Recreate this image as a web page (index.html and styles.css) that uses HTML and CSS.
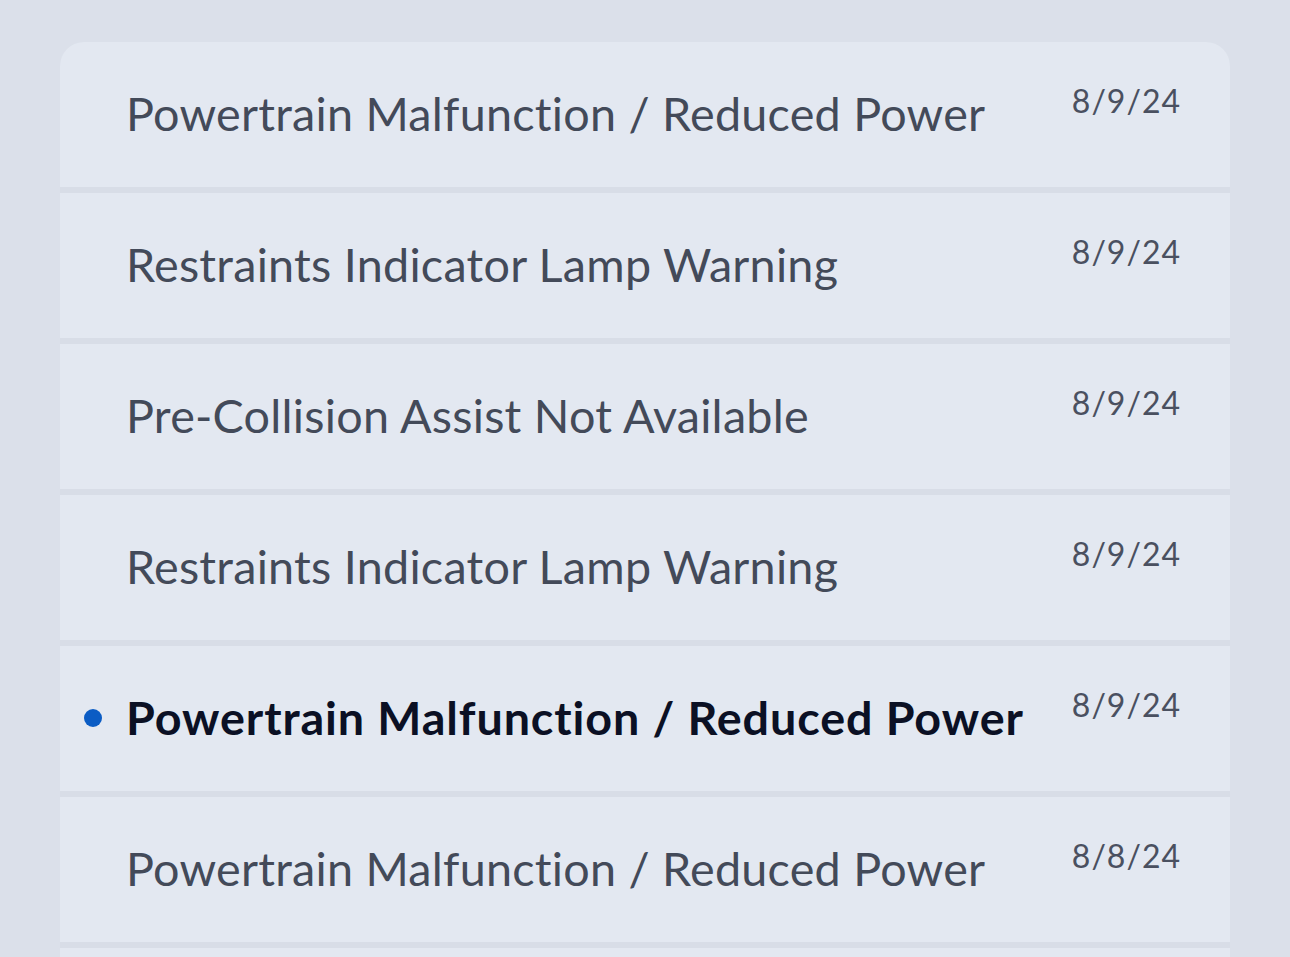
FILE: index.html
```html
<!DOCTYPE html>
<html lang="en">
<head>
    <meta charset="UTF-8">
    <meta name="viewport" content="width=device-width, initial-scale=1.0">
    <title>Vehicle Alerts</title>
    <link rel="stylesheet" href="styles.css">
</head>
<body>
    <main class="alerts">
        <ul class="alert-list">
            <li class="alert-row">
                <span class="alert-lead"></span>
                <span class="alert-title">Powertrain Malfunction / Reduced Power</span>
                <span class="alert-date">8/9/24</span>
            </li>
            <li class="alert-row">
                <span class="alert-lead"></span>
                <span class="alert-title">Restraints Indicator Lamp Warning</span>
                <span class="alert-date">8/9/24</span>
            </li>
            <li class="alert-row">
                <span class="alert-lead"></span>
                <span class="alert-title">Pre-Collision Assist Not Available</span>
                <span class="alert-date">8/9/24</span>
            </li>
            <li class="alert-row">
                <span class="alert-lead"></span>
                <span class="alert-title">Restraints Indicator Lamp Warning</span>
                <span class="alert-date">8/9/24</span>
            </li>
            <li class="alert-row unread">
                <span class="alert-lead"><span class="unread-dot"></span></span>
                <span class="alert-title">Powertrain Malfunction / Reduced Power</span>
                <span class="alert-date">8/9/24</span>
            </li>
            <li class="alert-row">
                <span class="alert-lead"></span>
                <span class="alert-title">Powertrain Malfunction / Reduced Power</span>
                <span class="alert-date">8/8/24</span>
            </li>
            <li class="alert-row"></li>
        </ul>
    </main>
</body>
</html>
```

FILE: styles.css
```css
* {
    margin: 0;
    padding: 0;
    box-sizing: border-box;
}

body {
    font-family: Lato, 'Open Sans', sans-serif;
    background: #dbe0ea;
    height: 957px;
    overflow: hidden;
}

.alerts {
    padding: 42px 60px 0 60px;
}

/* List card */
.alert-list {
    list-style: none;
    display: flex;
    flex-direction: column;
    gap: 6px;
    background: #d8dde7;
    border-radius: 24px 24px 0 0;
    overflow: hidden;
}

.alert-row {
    display: flex;
    align-items: center;
    height: 145px;
    background: #e3e8f1;
    padding-right: 49px;
    padding-bottom: 4px;
}

.alert-lead {
    flex: 0 0 66px;
    display: flex;
    align-items: center;
    padding-left: 24px;
}

.unread-dot {
    width: 18px;
    height: 18px;
    border-radius: 50%;
    background: #0b5cc4;
    margin-top: 2px;
}

.alert-title {
    flex: 1;
    font-size: 46.7px;
    color: #434a59;
    letter-spacing: 0.25px;
    white-space: nowrap;
}

.unread .alert-title {
    font-weight: 700;
    color: #0b1024;
    letter-spacing: 0.9px;
}

.alert-date {
    align-self: flex-start;
    margin-top: 39px;
    font-size: 32px;
    color: #4a5060;
    letter-spacing: 1px;
}
```
